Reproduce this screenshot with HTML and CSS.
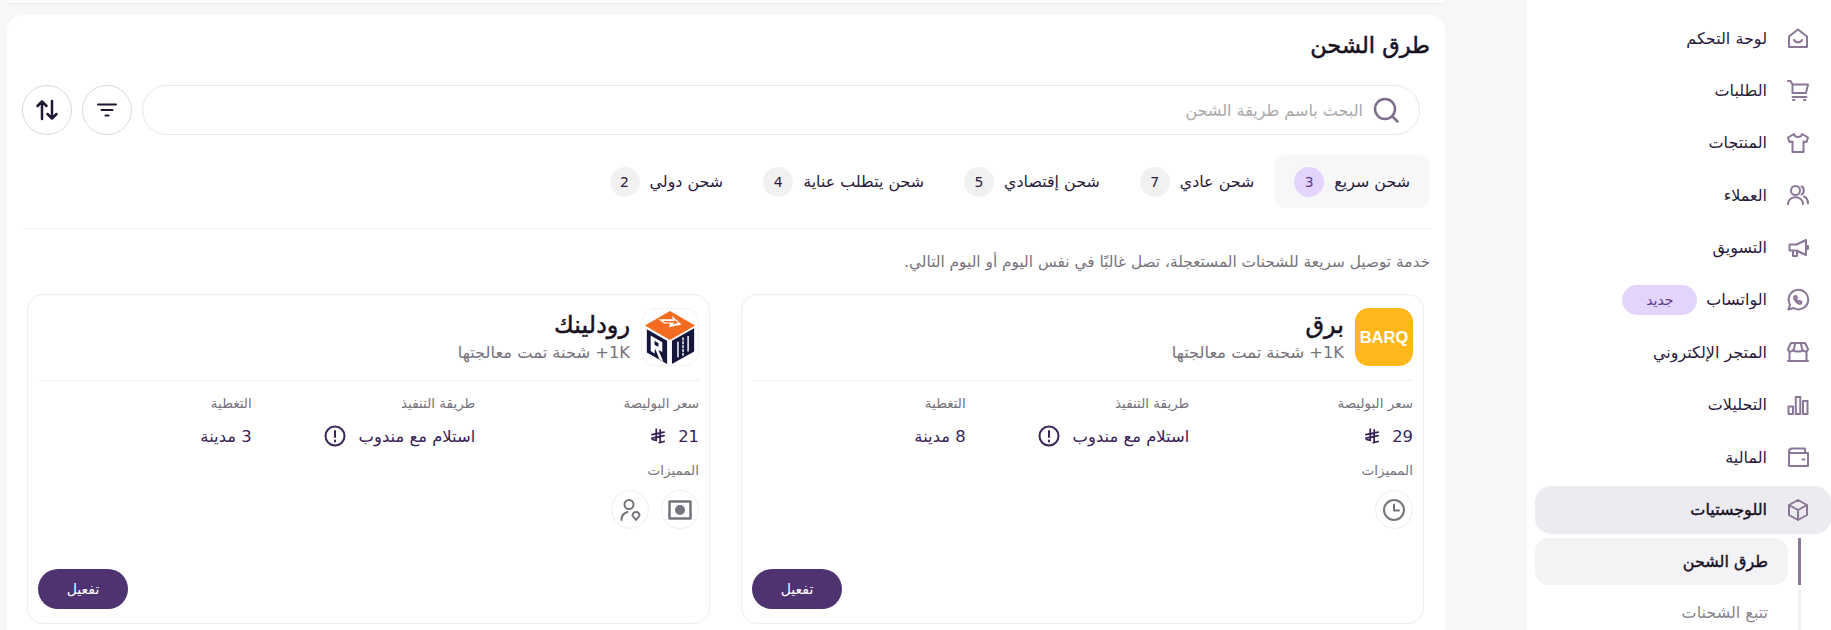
FILE: index.html
```html
<!DOCTYPE html>
<html lang="ar" dir="rtl">
<head>
  <meta charset="UTF-8">
  <title>طرق الشحن</title>
  <link rel="stylesheet" href="styles.css">
</head>
<body>
  <div class="page">
    <!-- Sidebar -->
    <aside class="sidebar">
      <a class="nav__item">
        <svg class="nav__icon" viewBox="0 0 24 24"><path d="M3 10.500 12 3.500l9 7V21H3zM8 14c1.500 3 6.500 3 8 0"/></svg>
        <span>لوحة التحكم</span>
      </a>
      <a class="nav__item">
        <svg class="nav__icon" viewBox="0 0 24 24"><path d="M2 3h2.500l2 3.500H22l-2 8.500H6.500V6.500M6.500 19h14"/><path class="dot" d="M7 22h1.500M18 22h1.500"/></svg>
        <span>الطلبات</span>
      </a>
      <a class="nav__item">
        <svg class="nav__icon" viewBox="0 0 24 24"><path d="M8 3 2 6.500 3.500 11l3-.5V21h11V10.500l3 .5L22 6.500 16 3c-.5 4-7.500 4-8 0z"/></svg>
        <span>المنتجات</span>
      </a>
      <a class="nav__item">
        <svg class="nav__icon" viewBox="0 0 24 24"><circle cx="9.500" cy="7.500" r="4.500"/><path d="M2 21c0-9 15-9 15 0M15.500 3.500c3 .8 3 7 0 8M18 13.500c2.500 1 4 3.500 4 7"/></svg>
        <span>العملاء</span>
      </a>
      <a class="nav__item">
        <svg class="nav__icon" viewBox="0 0 24 24"><path d="M3.500 8.500h7L20 4v15l-9.500-4.500h-7zM7 14.500V20h4v-5M20 10h2v3h-2"/></svg>
        <span>التسويق</span>
      </a>
      <a class="nav__item">
        <svg class="nav__icon" viewBox="0 0 24 24"><path d="M2.500 21.500 4 16.500A9.800 9.800 0 1 1 7.500 20z"/><path d="M9 8c-1.500 1-1 3 .5 5s4 3.500 5.500 2.500l.5-1.500-2-1-1 .7c-1-.5-2-1.700-2.300-2.700l.8-1-1-2z"/></svg>
        <span>الواتساب</span>
        <span class="nav__badge">جديد</span>
      </a>
      <a class="nav__item">
        <svg class="nav__icon" viewBox="0 0 24 24"><path d="M5 3h14l3 6c0 3-4 3-5 1-1 2-9 2-10 0-1 2-5 2-5-1zM3.500 11.500V21h17v-9.500M2 21h20M9 3.500 8 9M15 3.500 16 9"/></svg>
        <span>المتجر الإلكتروني</span>
      </a>
      <a class="nav__item">
        <svg class="nav__icon" viewBox="0 0 24 24"><path d="M2.500 13.500h4.500V21H2.500zM9.800 4h4.500v17H9.800zM17 8h4.500v13H17z"/></svg>
        <span>التحليلات</span>
      </a>
      <a class="nav__item">
        <svg class="nav__icon" viewBox="0 0 24 24"><path d="M3 7v14h19V8H3.500M3 7c0-2 1-3.500 3-3.500h13V8"/><path class="dot" d="M16.500 14.500h2"/></svg>
        <span>المالية</span>
      </a>
      <a class="nav__item nav__item--open">
        <svg class="nav__icon" viewBox="0 0 24 24"><path d="M12 2 21 7v10l-9 5-9-5V7zM3 7l9 5 9-5M12 12v10"/></svg>
        <span>اللوجستيات</span>
      </a>
      <div class="nav__sub nav__sub--active"><a class="nav__sublink">طرق الشحن</a></div>
      <div class="nav__sub"><a class="nav__sublink nav__sublink--muted">تتبع الشحنات</a></div>
    </aside>

    <!-- Main content -->
    <main class="main">
      <div class="top-strip"></div>
      <section class="panel">
        <h1 class="panel__title">طرق الشحن</h1>

        <div class="toolbar">
          <div class="search">
            <svg class="search__icon" viewBox="0 0 26 26"><circle cx="12" cy="12" r="10"/><path d="m19.500 19.500 5 5"/></svg>
            <span>البحث باسم طريقة الشحن</span>
          </div>
          <button class="round-btn">
            <svg viewBox="0 0 24 24"><path d="M3 6.500h18M6.500 12h11M10.500 17.500h3"/></svg>
          </button>
          <button class="round-btn">
            <svg class="sort-icon" viewBox="0 0 24 24"><path d="M7 21V3.500M2.500 8 7 3.500 11.500 8M17 3v17.500M12.500 16l4.500 4.500 4.500-4.500"/></svg>
          </button>
        </div>

        <div class="tabs">
          <div class="tab tab--active"><span>شحن سريع</span><span class="tab__count">3</span></div>
          <div class="tab"><span>شحن عادي</span><span class="tab__count">7</span></div>
          <div class="tab"><span>شحن إقتصادي</span><span class="tab__count">5</span></div>
          <div class="tab"><span>شحن يتطلب عناية</span><span class="tab__count">4</span></div>
          <div class="tab"><span>شحن دولي</span><span class="tab__count">2</span></div>
        </div>

        <p class="panel__desc">خدمة توصيل سريعة للشحنات المستعجلة، تصل غالبًا في نفس اليوم أو اليوم التالي.</p>

        <div class="cards">
          <article class="card">
            <header class="card__head">
              <div class="logo logo--barq"><span>BARQ</span></div>
              <div>
                <h2 class="card__name">برق</h2>
                <p class="card__meta">1K+ شحنة تمت معالجتها</p>
              </div>
            </header>
            <div class="card__grid">
              <div>
                <div class="label">سعر البوليصة</div>
                <div class="value">
                  <span>29</span>
                  <svg class="riyal" viewBox="0 0 16 18"><path d="M6 1v13l-4.500-1M10.500 2v13.500M1 7.500l14-3M1 11.500l14-3M9.500 16.500l5.500-1.200"/></svg>
                </div>
              </div>
              <div>
                <div class="label">طريقة التنفيذ</div>
                <div class="value value--method">
                  <span>استلام مع مندوب</span>
                  <svg class="alert" viewBox="0 0 22 22"><circle cx="11" cy="11" r="9.500"/><path d="M11 6v6M11 15.500v1"/></svg>
                </div>
              </div>
              <div>
                <div class="label">التغطية</div>
                <div class="value">8 مدينة</div>
              </div>
            </div>
            <div class="label label--features">المميزات</div>
            <div class="features">
              <span class="feature">
                <svg viewBox="0 0 24 24"><circle cx="12" cy="12" r="10"/><path d="M12 6.500V12.500h5"/></svg>
              </span>
            </div>
            <button class="card__btn">تفعيل</button>
          </article>

          <article class="card">
            <header class="card__head">
              <div class="logo logo--rod">
                <svg viewBox="0 0 58 58">
                  <path fill="#f26b21" d="M29 2 55 17 29 32 3 17z"/>
                  <path fill="#fff" d="M17 10.500h15l-1-3.500 10 9-13 3 1-4H23z"/>
                  <path fill="#f26b21" d="M21.500 12.500h12.500l-.5-1.500 4 3.500-5 1.200.5-1.700H24z"/>
                  <path fill="#14163c" d="M5 21 26 33v24L5 45z"/>
                  <path fill="#14163c" d="M31 33 54 20v24L31 57z"/>
                  <path fill="#fff" d="M9 27.500 21 34.500v10l-4-2 5 12-4-2.500-4.500-11-.5 5-4-2.500zM13 33v4l4 2.300V35.500zM36.500 34h1.500V50h-1.500zM47 28h1.500V44H47z"/>
                  <path stroke="#fff" stroke-dasharray="2 2" stroke-width="1.500" d="M42.500 30v19"/>
                </svg>
              </div>
              <div>
                <h2 class="card__name">رودلينك</h2>
                <p class="card__meta">1K+ شحنة تمت معالجتها</p>
              </div>
            </header>
            <div class="card__grid">
              <div>
                <div class="label">سعر البوليصة</div>
                <div class="value">
                  <span>21</span>
                  <svg class="riyal" viewBox="0 0 16 18"><path d="M6 1v13l-4.500-1M10.500 2v13.500M1 7.500l14-3M1 11.500l14-3M9.500 16.500l5.500-1.200"/></svg>
                </div>
              </div>
              <div>
                <div class="label">طريقة التنفيذ</div>
                <div class="value value--method">
                  <span>استلام مع مندوب</span>
                  <svg class="alert" viewBox="0 0 22 22"><circle cx="11" cy="11" r="9.500"/><path d="M11 6v6M11 15.500v1"/></svg>
                </div>
              </div>
              <div>
                <div class="label">التغطية</div>
                <div class="value">3 مدينة</div>
              </div>
            </div>
            <div class="label label--features">المميزات</div>
            <div class="features">
              <span class="feature">
                <svg viewBox="0 0 24 24"><path class="thick" d="M1.500 3.500h21v17h-21z"/><circle class="fill" cx="12" cy="12" r="4"/></svg>
              </span>
              <span class="feature">
                <svg viewBox="0 0 24 24"><circle cx="11" cy="6.500" r="4.500"/><path d="M3.500 22c0-4 2-7 6-8M18 22l-3.500-4.500a3.500 3.500 0 1 1 7 0z"/></svg>
              </span>
            </div>
            <button class="card__btn">تفعيل</button>
          </article>
        </div>
      </section>
    </main>
  </div>
</body>
</html>
```

FILE: styles.css
```css
* {
  box-sizing: border-box;
}

html, body {
  height: 100%;
  margin: 0;
}

body {
  background-color: #f7f7f7;
  color: #2a1b3d;
  font-family: "DejaVu Sans", sans-serif;
  font-size: 16px;
}

.page {
  display: flex;
  height: 630px;
  overflow: hidden;
}

svg {
  fill: none;
  stroke: currentColor;
  stroke-width: 2;
  stroke-linecap: round;
  stroke-linejoin: round;
}

/* Sidebar */
.sidebar {
  flex: 0 0 304px;
  display: flex;
  flex-direction: column;
  gap: 4.4px;
  padding: 14px 0 0 8px;
  background-color: #fff;
}

.nav__item {
  display: flex;
  align-items: center;
  flex: 0 0 48px;
  gap: 19px;
  padding-right: 21px;
  border-radius: 16px;
}

.nav__icon {
  flex: 0 0 24px;
  width: 24px;
  height: 24px;
  color: #8a7696;
}

.nav__badge {
  width: 75px;
  height: 30px;
  margin-right: -10px;
  border-radius: 15px;
  background-color: #e2d4fd;
  color: #5b3c88;
  font-size: 14px;
  line-height: 30px;
  text-align: center;
}

.nav__item--open {
  background-color: #ecebef;
  color: #17101f;
  -webkit-text-stroke: 0.4px #17101f;
}

.nav__sub {
  flex: 0 0 47px;
  margin-right: 30px;
  padding-right: 10px;
  border-right: 3px solid #f1f1f1;
}

.nav__sub--active {
  border-right-color: #8a7696;
}

.nav__sublink {
  display: flex;
  align-items: center;
  height: 47px;
  padding-right: 20px;
  border-radius: 14px;
  color: #8a8590;
}

.nav__sub--active .nav__sublink {
  background-color: #f3f3f6;
  color: #17101f;
  -webkit-text-stroke: 0.4px #17101f;
}

/* Main */
.main {
  flex: 1;
  padding: 0 82px 0 7px;
}

.top-strip {
  height: 4px;
  margin-bottom: 11px;
  background-color: #fff;
  border-bottom: 1px solid #eeeeee;
  border-radius: 0 0 14px 14px;
}

.panel {
  min-height: 660px;
  padding: 15px 15px 0;
  background-color: #fff;
  border-radius: 16px;
}

.panel__title {
  margin: 0 0 25px;
  color: #17101f;
  font-size: 22.5px;
  font-weight: 400;
  line-height: 30px;
  -webkit-text-stroke: 0.5px #17101f;
}

.toolbar {
  display: flex;
  gap: 10px;
  padding-right: 10px;
}

.search {
  flex: 1;
  display: flex;
  align-items: center;
  gap: 10px;
  height: 50px;
  padding-right: 20px;
  border: 1px solid #e8e8e8;
  border-radius: 25px;
  color: #a9a9a9;
}

.search__icon {
  width: 26px;
  height: 26px;
  color: #7d6e8b;
  stroke-width: 2.5;
}

.round-btn {
  display: flex;
  align-items: center;
  justify-content: center;
  width: 50px;
  height: 50px;
  padding: 0;
  border: 1px solid #d9d7de;
  border-radius: 50%;
  background-color: #fff;
  color: #221632;
}

.round-btn svg {
  width: 24px;
  height: 24px;
}

.round-btn .sort-icon {
  stroke-width: 2.5;
}

.tabs {
  display: flex;
  margin-top: 20px;
  padding-bottom: 20px;
  border-bottom: 1px solid #f0f0f0;
  font-size: 15.9px;
}

.tab {
  display: flex;
  align-items: center;
  gap: 10px;
  height: 53px;
  padding: 0 20px;
  border-radius: 12px;
}

.tab--active {
  background-color: #f7f7f7;
}

.tab__count {
  width: 30px;
  height: 30px;
  border-radius: 50%;
  background-color: #f1f1f1;
  font-size: 14px;
  line-height: 30px;
  text-align: center;
}

.tab--active .tab__count {
  background-color: #e2d4fd;
  color: #5b3c88;
}

.panel__desc {
  margin: 21px 0 20px;
  color: #77737c;
  font-size: 15.35px;
  line-height: 24px;
}

.cards {
  display: grid;
  grid-template-columns: 1fr 1fr;
  gap: 31px;
  padding: 0 6px 0 5px;
}

.card {
  display: flex;
  flex-direction: column;
  height: 330px;
  padding: 13px 10px 14px;
  border: 1px solid #eeeeee;
  border-radius: 16px;
}

.card__head {
  display: flex;
  align-items: center;
  gap: 11px;
  padding-bottom: 14px;
  border-bottom: 1px solid #f0f0f0;
}

.logo {
  width: 58px;
  height: 58px;
  border-radius: 14px;
}

.logo--barq {
  display: flex;
  align-items: center;
  justify-content: center;
  background-color: #ffb81c;
  color: #fff;
  font-family: "Liberation Sans", sans-serif;
  font-size: 16.5px;
  font-weight: 700;
  direction: ltr;
}

.logo--rod {
  border: 1px solid #f2f2f2;
}

.logo--rod svg {
  display: block;
  width: 56px;
  height: 56px;
  stroke: none;
}

.card__name {
  margin: 0;
  color: #17101f;
  font-size: 24px;
  font-weight: 400;
  line-height: 32px;
  -webkit-text-stroke: 0.5px #17101f;
}

.card__meta {
  margin: 0;
  color: #77737c;
  font-size: 16.3px;
  line-height: 24px;
}

.card__grid {
  display: grid;
  grid-template-columns: repeat(3, 1fr);
  gap: 10px;
  margin-top: 11px;
}

.label {
  color: #77737c;
  font-size: 13.5px;
  line-height: 22px;
}

.value {
  display: flex;
  align-items: center;
  gap: 13px;
  height: 24px;
  margin-top: 10px;
  color: #3a2457;
  font-size: 16.4px;
}

.riyal {
  width: 14px;
  height: 16px;
}

.alert {
  width: 22px;
  height: 22px;
}

.label--features {
  margin-top: 11px;
}

.features {
  display: flex;
  gap: 12px;
  margin-top: 9px;
}

.feature {
  display: flex;
  align-items: center;
  justify-content: center;
  width: 38px;
  height: 39px;
  border: 1px solid #f0f0f0;
  border-radius: 50%;
  color: #77737c;
}

.feature svg {
  width: 24px;
  height: 24px;
}

.feature .fill {
  fill: currentColor;
}

.feature .thick {
  stroke-width: 2.5;
}

.card__btn {
  align-self: flex-end;
  width: 90px;
  height: 40px;
  margin-top: auto;
  padding: 0;
  border: 0;
  border-radius: 20px;
  background-color: #4f3270;
  color: #fff;
  font-family: inherit;
  font-size: 14px;
}
```
